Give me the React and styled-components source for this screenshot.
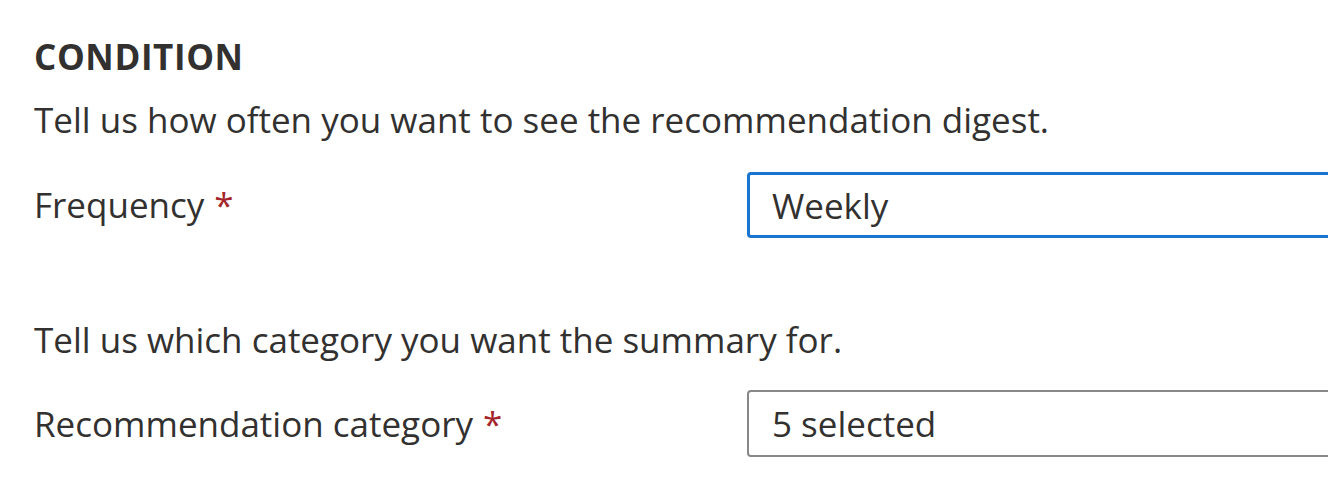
import React from 'react';
import styled, {createGlobalStyle} from 'styled-components';

const GlobalStyle = createGlobalStyle`
    html, body {
        margin: 0;
        padding: 0;
        background: #ffffff;
        overflow: hidden;
    }
    body {
        font-family: "Open Sans", "Noto Sans", sans-serif;
        color: #323130;
    }
`;

const Page = styled.div`
    width: 1328px;
    height: 501px;
    box-sizing: border-box;
    padding: 32px 0 0 34px;
    overflow: hidden;
`;

const SectionTitle = styled.h2`
    margin: 0;
    font-size: 35px;
    line-height: 50px;
    font-weight: 700;
    letter-spacing: 0.6px;
`;

const Description = styled.p`
    margin: ${p => p.$top}px 0 0;
    font-size: 35px;
    line-height: 50px;
    font-weight: 400;
`;

const FieldRow = styled.div`
    display: grid;
    grid-template-columns: 713px 640px;
    align-items: center;
    margin-top: ${p => p.$top}px;
`;

const Label = styled.label`
    font-size: 35px;
    line-height: 50px;
`;

const Required = styled.span`
    color: #a4262c;
    margin-left: 10px;
`;

const Field = styled.div`
    height: ${p => (p.$focused ? 66 : 67)}px;
    box-sizing: border-box;
    display: flex;
    align-items: center;
    padding-left: ${p => (p.$focused ? 22 : 23)}px;
    border: ${p => (p.$focused ? '3px solid #1b74cf' : '2px solid #8a8886')};
    border-radius: 4px;
    font-size: 35px;
    background: #ffffff;
`;

export default function App() {
    return (
        <>
            <GlobalStyle />
            <Page>
                <SectionTitle>CONDITION</SectionTitle>
                <Description $top={13}>Tell us how often you want to see the recommendation digest.</Description>
                <FieldRow $top={27}>
                    <Label>Frequency<Required>*</Required></Label>
                    <Field $focused>Weekly</Field>
                </FieldRow>
                <Description $top={77}>Tell us which category you want the summary for.</Description>
                <FieldRow $top={25}>
                    <Label>Recommendation category<Required>*</Required></Label>
                    <Field>5 selected</Field>
                </FieldRow>
            </Page>
        </>
    );
}
